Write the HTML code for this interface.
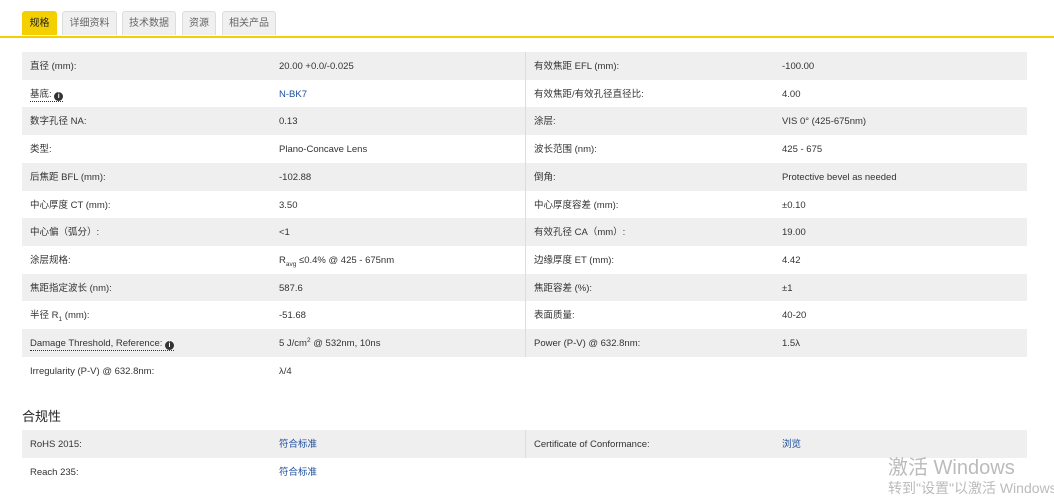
<!DOCTYPE html><html><head><meta charset="utf-8"><style>
body{margin:0;background:#fff;font-family:"Liberation Sans","Noto Sans CJK SC",sans-serif;font-size:9.5px;color:#333;width:1054px;height:504px;overflow:hidden;position:relative}
.tabs{position:absolute;top:11px;left:0;width:1054px;height:25px;border-bottom:2px solid #f5d000}
.tab{position:absolute;top:0;height:23px;line-height:24px;background:#f0f0f0;border:1px solid #ddd;border-bottom:none;border-radius:3px 3px 0 0;text-align:center;color:#666;font-size:10px}
.tab.on{background:#f5d000;border-color:#f5d000;color:#222}
table{position:absolute;left:22px;width:1005px;border-collapse:collapse;table-layout:fixed}
td{height:24.7px;line-height:24.7px;padding:3px 0 0 0;vertical-align:top;white-space:nowrap}
tr:nth-child(odd) td{background:#efefef}
td.l{width:249px;padding-left:8px}
td.v{width:246px}
td.r{width:248px;padding-left:8px;border-left:1px solid #ddd}
sub,sup{line-height:0;font-size:6.5px}
a{color:#1a4d9c;text-decoration:none}
.d{border-bottom:1px dotted #333;line-height:12px;display:inline-block}
.i{display:inline-block;width:9px;height:9px;border-radius:50%;background:#333;color:#fff;font-size:7px;line-height:9px;text-align:center;font-weight:bold;vertical-align:-1px}
h3{position:absolute;left:22px;top:406px;margin:0;font-size:13px;font-weight:normal;color:#222}
.wm{position:absolute;left:888px;color:#bbb;white-space:nowrap}
</style></head><body>
<div class="tabs">
<div class="tab on" style="left:22px;width:33px">规格</div>
<div class="tab" style="left:62px;width:53px">详细资料</div>
<div class="tab" style="left:122px;width:52px">技术数据</div>
<div class="tab" style="left:182px;width:32px">资源</div>
<div class="tab" style="left:222px;width:52px">相关产品</div>
</div>
<table style="top:52px">
<tr><td class="l">直径 (mm):</td><td class="v">20.00 +0.0/-0.025</td><td class="r">有效焦距 EFL (mm):</td><td>-100.00</td></tr>
<tr><td class="l"><span class="d">基底: <span class="i">i</span></span></td><td class="v"><a>N-BK7</a></td><td class="r">有效焦距/有效孔径直径比:</td><td>4.00</td></tr>
<tr><td class="l">数字孔径 NA:</td><td class="v">0.13</td><td class="r">涂层:</td><td>VIS 0° (425-675nm)</td></tr>
<tr><td class="l">类型:</td><td class="v">Plano-Concave Lens</td><td class="r">波长范围 (nm):</td><td>425 - 675</td></tr>
<tr><td class="l">后焦距 BFL (mm):</td><td class="v">-102.88</td><td class="r">倒角:</td><td>Protective bevel as needed</td></tr>
<tr><td class="l">中心厚度 CT (mm):</td><td class="v">3.50</td><td class="r">中心厚度容差 (mm):</td><td>±0.10</td></tr>
<tr><td class="l">中心偏（弧分）:</td><td class="v">&lt;1</td><td class="r">有效孔径 CA（mm）:</td><td>19.00</td></tr>
<tr><td class="l">涂层规格:</td><td class="v">R<sub>avg</sub> ≤0.4% @ 425 - 675nm</td><td class="r">边缘厚度 ET (mm):</td><td>4.42</td></tr>
<tr><td class="l">焦距指定波长 (nm):</td><td class="v">587.6</td><td class="r">焦距容差 (%):</td><td>±1</td></tr>
<tr><td class="l">半径 R<sub>1</sub> (mm):</td><td class="v">-51.68</td><td class="r">表面质量:</td><td>40-20</td></tr>
<tr><td class="l"><span class="d">Damage Threshold, Reference: <span class="i">i</span></span></td><td class="v">5 J/cm<sup>2</sup> @ 532nm, 10ns</td><td class="r">Power (P-V) @ 632.8nm:</td><td>1.5λ</td></tr>
<tr><td class="l">Irregularity (P-V) @ 632.8nm:</td><td class="v">λ/4</td><td class="r" style="border:none"></td><td></td></tr>
</table>
<h3>合规性</h3>
<table style="top:430px">
<tr><td class="l">RoHS 2015:</td><td class="v"><a>符合标准</a></td><td class="r">Certificate of Conformance:</td><td><a>浏览</a></td></tr>
<tr><td class="l">Reach 235:</td><td class="v"><a>符合标准</a></td><td class="r" style="border:none"></td><td></td></tr>
</table>
<div class="wm" style="top:451px;font-size:20px">激活 Windows</div>
<div class="wm" style="top:478px;font-size:14px">转到"设置"以激活 Windows。</div>
</body></html>
